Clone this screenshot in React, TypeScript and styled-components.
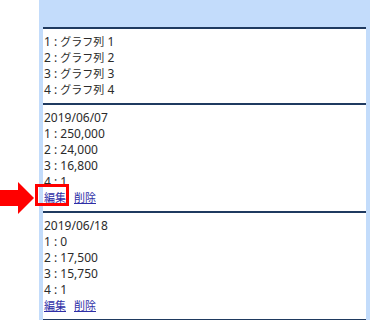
import styled, { createGlobalStyle } from 'styled-components'

const GlobalStyle = createGlobalStyle`
  html, body {
    margin: 0;
    padding: 0;
    background: #ffffff;
  }
  body {
    font-family: "Noto Sans", "Noto Sans CJK JP", sans-serif;
    font-size: 12px;
    color: #2b2b2b;
  }
`

const PageUI = styled.div`
  position: relative;
  width: 370px;
  height: 320px;
  overflow: hidden;
`

const FrameUI = styled.div`
  margin-left: 39px;
  padding: 27px 4px 0 4px;
  background: #c3dcfb;
  height: 100%;
  box-sizing: border-box;
`

const PanelUI = styled.div`
  background: #ffffff;
  border-bottom: 2px solid #1f3a60;
`

const SectionUI = styled.section`
  border-top: 2px solid #1f3a60;
  padding: 5px 1px 5px 1px;
  line-height: 16px;

  > .line {
    height: 16px;
    white-space: nowrap;
  }
`

const Ja = styled.span`
  font-size: 11px;
`

const LinksUI = styled.div`
  display: flex;
  gap: 8px;
  height: 16px;
`

const LinkUI = styled.a<{ $marked?: boolean }>`
  position: relative;
  display: inline-block;
  height: 16px;
  line-height: 16px;
  font-size: 11px;
  color: #2e2ea6;
  text-decoration: underline;
  cursor: pointer;

  ${(p) =>
    p.$marked &&
    `
    &::before {
      content: '';
      position: absolute;
      left: -9px;
      right: -3px;
      top: -6px;
      bottom: 0;
      border: 3px solid #ff0000;
    }
  `}
`

const ArrowUI = styled.svg`
  position: absolute;
  left: 0;
  top: 182px;
`

type Entry = { date: string; values: string[] }

const entries: Entry[] = [
  { date: '2019/06/07', values: ['250,000', '24,000', '16,800', '1'] },
  { date: '2019/06/18', values: ['0', '17,500', '15,750', '1'] },
]

function EntrySection({ entry, marked }: { entry: Entry; marked?: boolean }) {
  return (
    <SectionUI>
      <div className="line">{entry.date}</div>
      {entry.values.map((v, i) => (
        <div className="line" key={i}>
          {i + 1} : {v}
        </div>
      ))}
      <LinksUI>
        <LinkUI $marked={marked}>編集</LinkUI>
        <LinkUI>削除</LinkUI>
      </LinksUI>
    </SectionUI>
  )
}

export default function App() {
  return (
    <>
      <GlobalStyle />
      <PageUI>
        <FrameUI>
          <PanelUI>
            <SectionUI>
              {[1, 2, 3, 4].map((n) => (
                <div className="line" key={n}>
                  {n} : <Ja>グラフ列</Ja> {n}
                </div>
              ))}
            </SectionUI>
            {entries.map((e, i) => (
              <EntrySection key={i} entry={e} marked={i === 0} />
            ))}
          </PanelUI>
        </FrameUI>
        <ArrowUI width="34" height="32" viewBox="0 0 34 32">
          <polygon points="0,8 18,8 18,0 34,16 18,32 18,24 0,24" fill="#ff0000" />
        </ArrowUI>
      </PageUI>
    </>
  )
}
